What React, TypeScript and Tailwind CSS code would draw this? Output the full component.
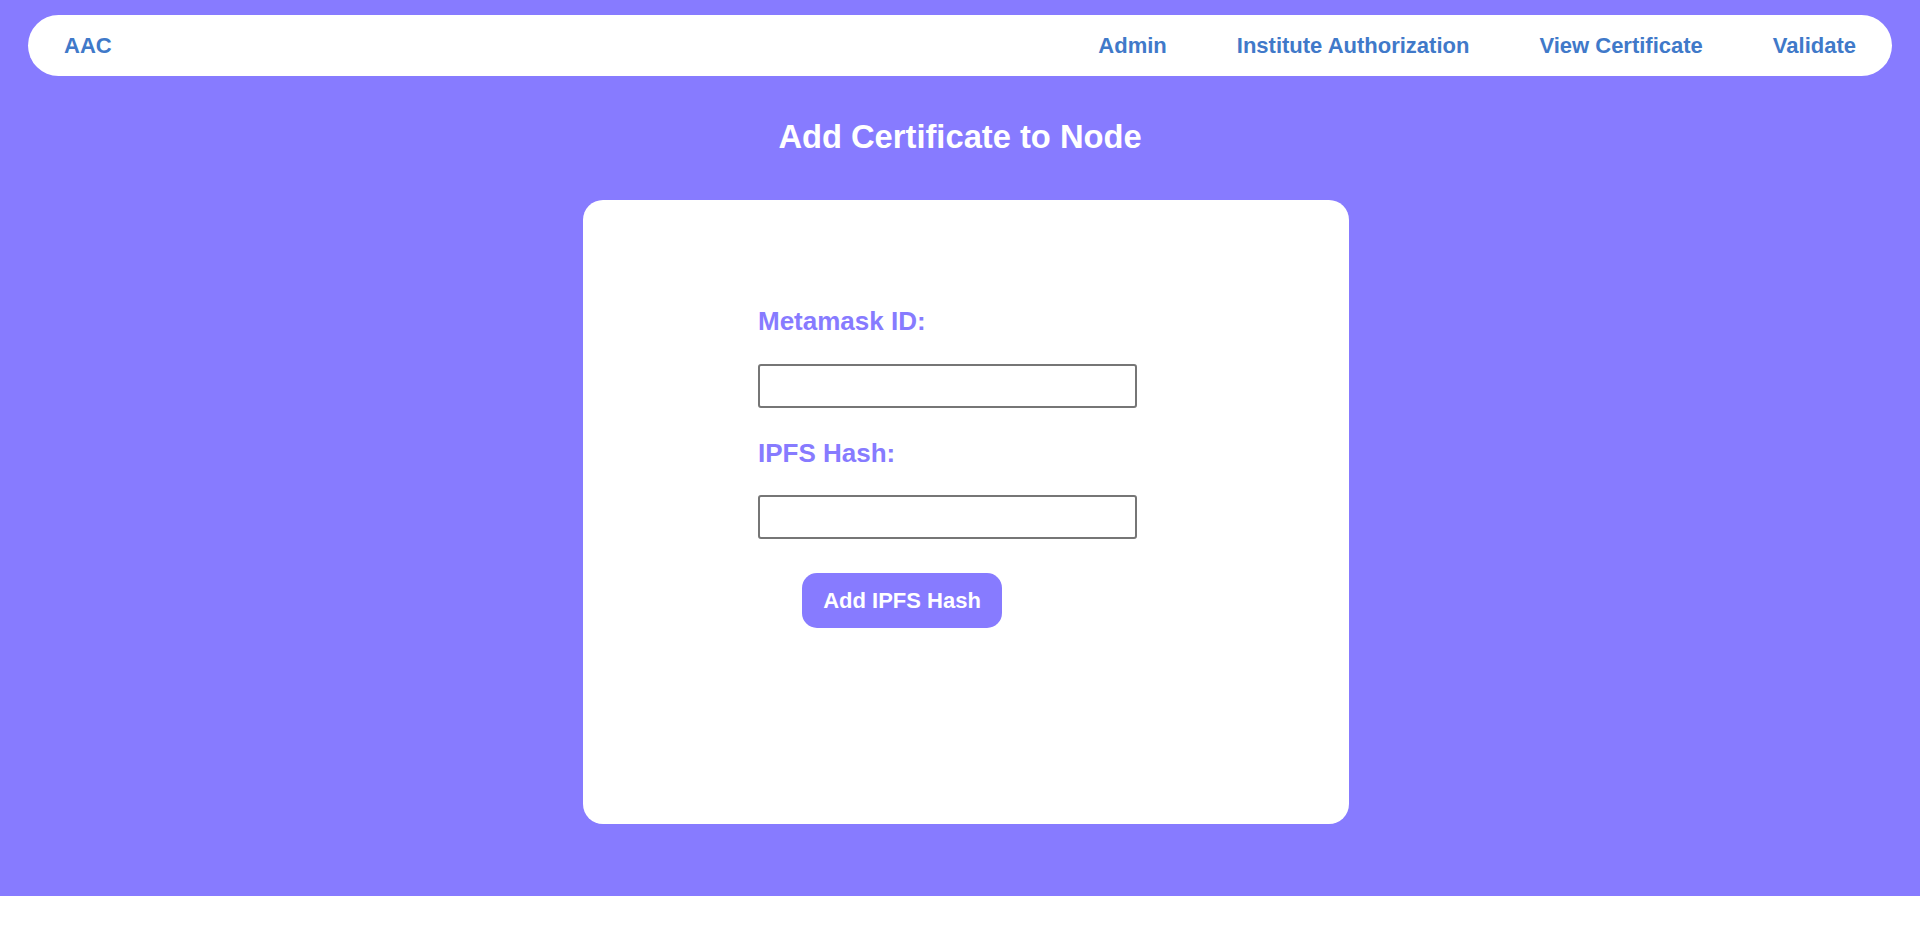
import { useState } from "react";

const links = ["Admin", "Institute Authorization", "View Certificate", "Validate"];

export default function App() {
  const [account, setAccount] = useState("");
  const [hash, setHash] = useState("");

  return (
    <div className="min-h-screen bg-white font-['Liberation_Sans',Arial,sans-serif]">
      <div className="bg-[#877bff] px-[28px] pt-[15px] pb-[72px]">
        {/* Navbar */}
        <nav className="flex h-[61px] items-center justify-between rounded-full bg-white px-[36px]">
          <span className="text-[22px] font-bold leading-[24px] text-[#4079c9]">AAC</span>
          <div className="flex gap-[70px] text-[22px] font-bold text-[#4079c9]">
            {links.map((l) => (
              <a key={l} href="#" className="leading-[24px]">
                {l}
              </a>
            ))}
          </div>
        </nav>

        <h1 className="mt-[42px] text-center text-[32.7px] font-bold leading-[37px] text-white">
          Add Certificate to Node
        </h1>

        {/* Form card */}
        <div className="mt-[45px] flex justify-center pl-[12px]">
          <div className="h-[624px] w-[766px] rounded-[20px] bg-white pt-[106px] pl-[175px]">
            <label className="block text-[26px] font-bold leading-[30px] text-[#877bff]">
              Metamask ID:
            </label>
            <input
              value={account}
              onChange={(e) => setAccount(e.target.value)}
              className="mt-[28px] block h-[44px] w-[379px] rounded-[3px] border-2 border-[#767676] bg-white px-2 text-[16px] outline-none"
            />
            <label className="mt-[30px] block text-[26px] font-bold leading-[30px] text-[#877bff]">
              IPFS Hash:
            </label>
            <input
              value={hash}
              onChange={(e) => setHash(e.target.value)}
              className="mt-[27px] block h-[44px] w-[379px] rounded-[3px] border-2 border-[#767676] bg-white px-2 text-[16px] outline-none"
            />
            <button className="mt-[34px] ml-[44px] h-[55px] w-[200px] rounded-[15px] bg-[#877bff] text-[22px] font-bold text-white">
              Add IPFS Hash
            </button>
          </div>
        </div>
      </div>
    </div>
  );
}
